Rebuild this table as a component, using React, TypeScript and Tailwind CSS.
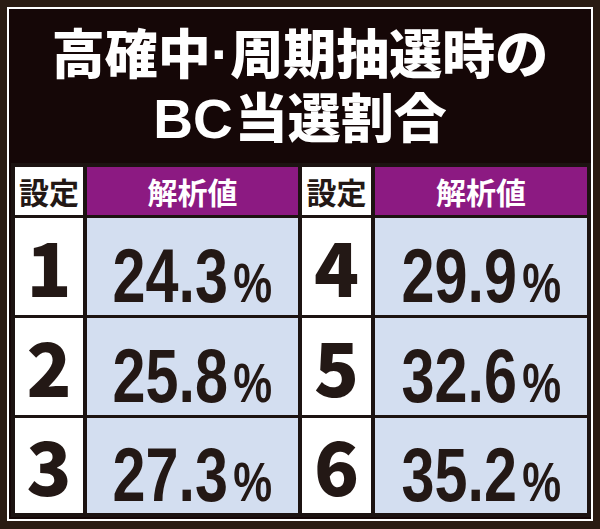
import React from "react";

const jp = { fontFamily: '"Noto Sans CJK JP", "Noto Sans", sans-serif' };
const num = { fontFamily: '"Liberation Sans", Arial, sans-serif' };

function SettingCell({ n }: { n: string }) {
  return (
    <div className="bg-white flex items-center justify-center text-[#231815]">
      <span className="text-[74px] font-black leading-none pb-[4px]" style={jp}>
        {n}
      </span>
    </div>
  );
}

function ValueCell({ v }: { v: string }) {
  return (
    <div className="bg-[#d3def0] flex items-center justify-center pt-[18px] text-[#231815]">
      <span className="inline-block scale-x-[0.78] whitespace-nowrap leading-none font-bold" style={num}>
        <span className="text-[76px]">{v}</span>
        <span className="text-[56px] ml-[7px]">%</span>
      </span>
    </div>
  );
}

export default function App() {
  const rows: [string, string, string, string][] = [
    ["1", "24.3", "4", "29.9"],
    ["2", "25.8", "5", "32.6"],
    ["3", "27.3", "6", "35.2"],
  ];
  return (
    <div className="w-[600px] h-[529px] bg-[#2a1b12] p-[7px]">
      <div className="w-[586px] h-[514px] border-2 border-white bg-[#150707] flex flex-col">
        <div className="h-[154px] flex flex-col items-center pt-[11px] text-white" style={jp}>
          <div className="h-[63px] text-[53px] leading-[63px] font-black whitespace-nowrap">
            高確中<span className="font-bold text-[58px]" style={num}>·</span>周期抽選時の
          </div>
          <div className="h-[64px] text-[53px] leading-[64px] font-black whitespace-nowrap">
            <span className="text-[55px] font-bold mr-[2px]" style={num}>BC</span>当選割合
          </div>
        </div>
        <div className="ml-[2px] w-[580px] h-[354px] bg-[#1c1311] p-[4px] grid grid-cols-[68px_211px_69px_212px] grid-rows-[48px_97px_97px_95px] gap-x-[4px] gap-y-[3px]">
          <div className="bg-white flex items-center justify-center text-[30px] font-bold text-[#231815]" style={jp}>設定</div>
          <div className="bg-[#8c1a82] flex items-center justify-center text-[30px] font-bold text-white" style={jp}>解析値</div>
          <div className="bg-white flex items-center justify-center text-[30px] font-bold text-[#231815]" style={jp}>設定</div>
          <div className="bg-[#8c1a82] flex items-center justify-center text-[30px] font-bold text-white" style={jp}>解析値</div>
          {rows.map((r) => (
            <React.Fragment key={r[0]}>
              <SettingCell n={r[0]} />
              <ValueCell v={r[1]} />
              <SettingCell n={r[2]} />
              <ValueCell v={r[3]} />
            </React.Fragment>
          ))}
        </div>
      </div>
    </div>
  );
}
